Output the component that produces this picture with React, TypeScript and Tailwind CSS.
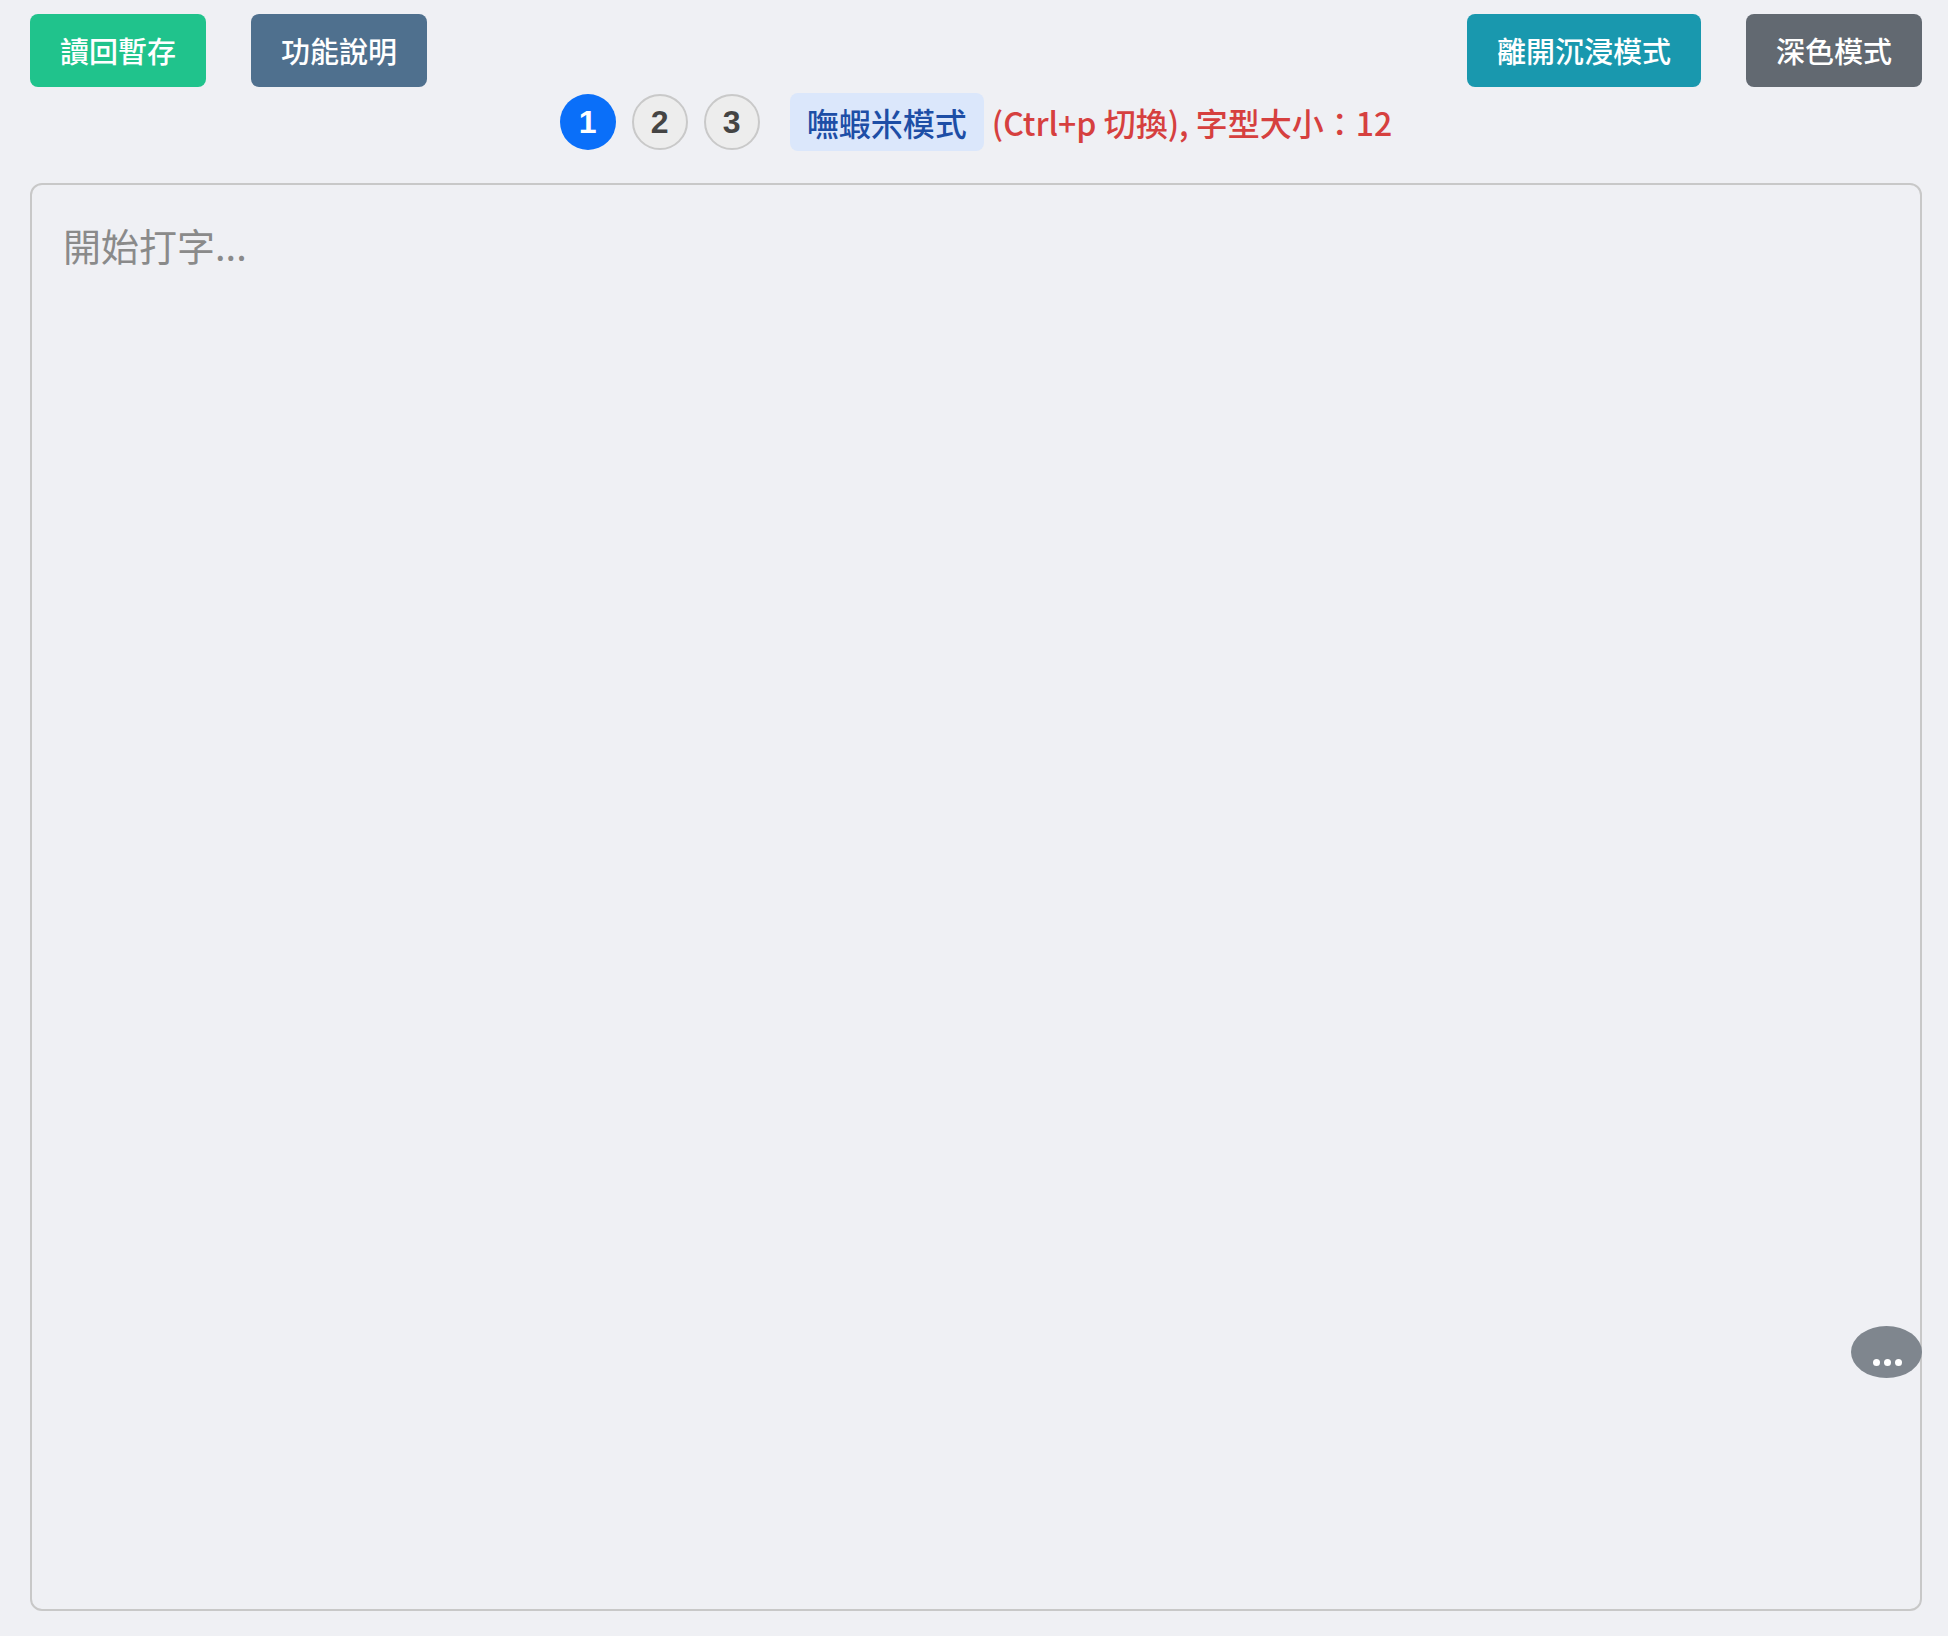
import { FC } from 'react';

const cjk = { fontFamily: '"Noto Sans CJK TC", "Noto Sans", sans-serif' };

interface BtnProps {
  label: string;
  className: string;
}

const Btn: FC<BtnProps> = ({ label, className }) => (
  <button
    className={`h-[73px] px-[30px] rounded-[8px] text-[29px] font-medium text-white leading-none ${className}`}
  >
    {label}
  </button>
);

const Step: FC<{ n: number; active?: boolean }> = ({ n, active }) => (
  <div
    className={
      active
        ? 'w-[56px] h-[56px] rounded-full bg-[#0a6ff9] text-white flex items-center justify-center text-[32px] font-bold'
        : 'w-[56px] h-[56px] rounded-full bg-[#ededed] border-2 border-[#c9c9c9] text-[#444444] flex items-center justify-center text-[32px] font-bold'
    }
    style={{ fontFamily: '"Liberation Sans", Arial, sans-serif' }}
  >
    {n}
  </div>
);

export default function App() {
  return (
    <div className="min-h-screen h-screen bg-[#eff0f4] flex flex-col pl-[30px] pr-[26px] pt-[14px] pb-[25px]" style={cjk}>
      <div className="flex items-center justify-between">
        <div className="flex gap-[45px]">
          <Btn label="讀回暫存" className="bg-[#20c38c]" />
          <Btn label="功能說明" className="bg-[#4f708e]" />
        </div>
        <div className="flex gap-[45px]">
          <Btn label="離開沉浸模式" className="bg-[#1998ae]" />
          <Btn label="深色模式" className="bg-[#626971]" />
        </div>
      </div>

      <div className="flex items-center justify-center mt-[6px] h-[58px]">
        <div className="flex items-center gap-[16px]">
          <Step n={1} active />
          <Step n={2} />
          <Step n={3} />
        </div>
        <span className="ml-[30px] h-[58px] px-[17px] rounded-[8px] bg-[#dbe7fb] text-[#1d4ea6] text-[32px] font-medium flex items-center">
          嘸蝦米模式
        </span>
        <span className="ml-[8px] text-[#d6403f] text-[32px] font-medium">(Ctrl+p 切換), 字型大小：12</span>
      </div>

      <div className="relative flex-1 mt-[32px]">
        <textarea
          className="w-full h-full resize-none rounded-[12px] border-2 border-[#c8c8c8] bg-transparent px-[31px] pt-[31px] text-[38px] leading-[1.5] outline-none placeholder:text-[#8a8a8a]"
          placeholder="開始打字..."
          style={cjk}
        />
        <div className="absolute right-0 top-[1143px] w-[71px] h-[52px] rounded-[50%] bg-[#7f868e] flex items-end justify-center gap-[4px] pb-[12px] pl-[2px]">
          <span className="w-[7px] h-[7px] rounded-full bg-white" />
          <span className="w-[7px] h-[7px] rounded-full bg-white" />
          <span className="w-[7px] h-[7px] rounded-full bg-white" />
        </div>
      </div>
    </div>
  );
}
